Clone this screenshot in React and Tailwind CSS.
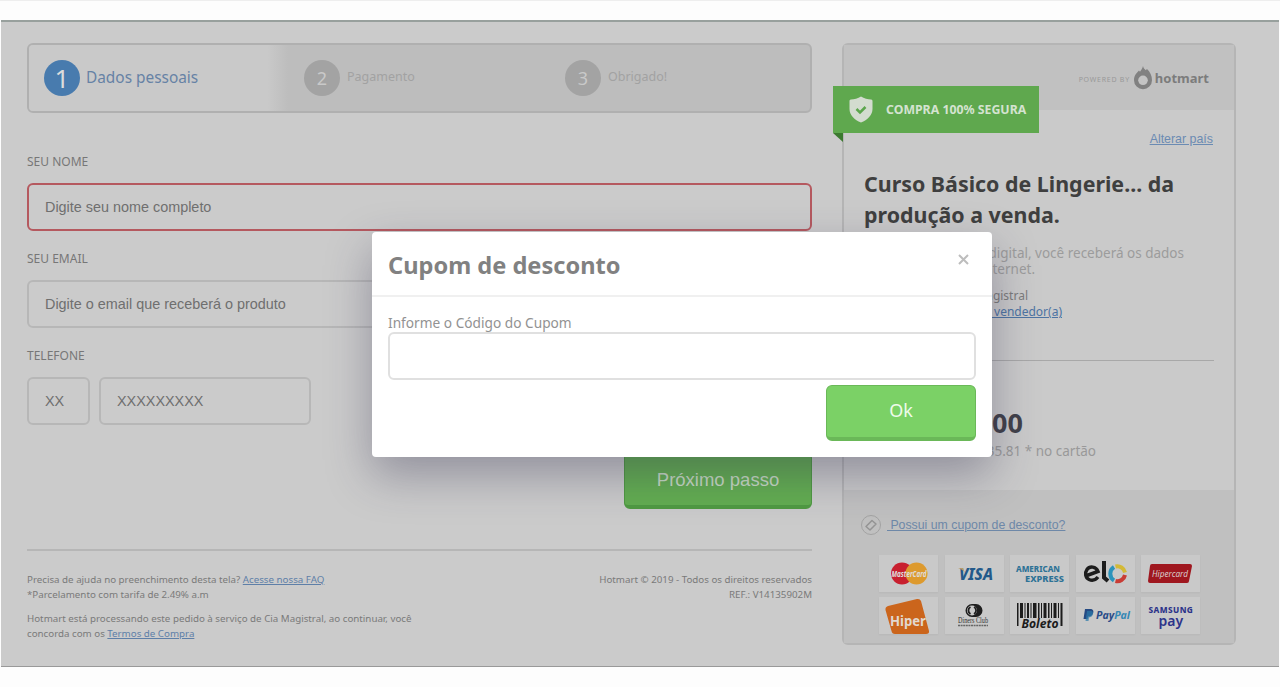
import React from "react";

const steps = [
  { number: 2, label: "Pagamento" },
  { number: 3, label: "Obrigado!" },
];

const inputClass =
  "block h-12 w-full rounded-md border-2 bg-transparent px-4 font-['Liberation_Sans',sans-serif] outline-none placeholder:text-[#6f6f6f] placeholder:opacity-100";

const Steps = () => (
  <div className="flex h-[70px] overflow-hidden rounded-md border-2 border-[#b0b0b0] bg-[#bdbdbd]">
    <div className="flex w-[259px] items-center bg-gradient-to-r from-[#c9c9c9] from-92% to-[#bdbdbd] pl-[15px]">
      <span className="flex h-9 w-9 items-center justify-center rounded-full bg-[#487bae] text-[26px] leading-none text-[#dcdcdc]">
        1
      </span>
      <span className="ml-[6px] pb-[1px] text-[15.4px] text-[#6682a5]">Dados pessoais</span>
    </div>
    {steps.map((step) => (
      <div key={step.number} className="flex w-[261px] items-center pl-4">
        <span className="flex h-9 w-9 items-center justify-center rounded-full bg-[#a3a3a3] text-[18px] text-[#c9c9c9]">
          {step.number}
        </span>
        <span className="ml-[7px] pb-[1px] text-[12.5px] text-[#a2a2a2]">{step.label}</span>
      </div>
    ))}
  </div>
);

const Label = ({ children }) => (
  <div className="flex h-[22px] items-center text-[12px] text-[#777777]">{children}</div>
);

const CheckoutForm = () => (
  <div className="w-[785px] pt-[21px]">
    <Steps />
    <div className="pt-[38px]">
      <Label>SEU NOME</Label>
      <input
        className={`${inputClass} mt-[10px] border-[#b5595f] text-[14.4px]`}
        placeholder="Digite seu nome completo"
      />
    </div>
    <div className="pt-[17px]">
      <Label>SEU EMAIL</Label>
      <input
        className={`${inputClass} mt-[10px] border-[#b7b7b7] text-[14.4px]`}
        placeholder="Digite o email que receberá o produto"
      />
    </div>
    <div className="pt-[17px]">
      <Label>TELEFONE</Label>
      <div className="mt-[10px] flex gap-[9px]">
        <div className="w-[63px]">
          <input className={`${inputClass} border-[#b7b7b7] text-[14.4px]`} placeholder="XX" />
        </div>
        <div className="w-[212px]">
          <input className={`${inputClass} border-[#b7b7b7] text-[14.4px]`} placeholder="XXXXXXXXX" />
        </div>
      </div>
    </div>
    <div className="mt-[27px] flex justify-end">
      <button className="h-[57px] w-[188px] rounded-md border border-b-4 border-[#4f9a42] bg-[#63ae51] pt-[2px] font-['Liberation_Sans',sans-serif] text-[18.5px] text-[#c9dcc5]">
        Próximo passo
      </button>
    </div>
    <div className="mt-10 border-t-2 border-[#b6b6b6]" />
    <div className="flex justify-between pt-[22px] text-[9.75px] leading-[14.5px] text-[#7a7a7a]">
      <div>
        <p>
          Precisa de ajuda no preenchimento desta tela?{" "}
          <a className="text-[#5e7fa8] underline">Acesse nossa FAQ</a>
        </p>
        <p>*Parcelamento com tarifa de 2.49% a.m</p>
        <p className="mt-[10px] w-[400px]">
          Hotmart está processando este pedido à serviço de Cia Magistral, ao continuar, você
          <br />
          concorda com os <a className="text-[#5e7fa8] underline">Termos de Compra</a>
        </p>
      </div>
      <div className="text-right">
        <p>Hotmart © 2019 - Todos os direitos reservados</p>
        <p>REF.: V14135902M</p>
      </div>
    </div>
  </div>
);

const Flame = () => (
  <svg width="18" height="24" viewBox="0 0 18 24">
    <path
      d="M9 0c.3 2 1.500 3 2.700 4.300l1.300-1.300c3 3 5 6.500 5 11.200A9 9 0 0 1 0 14.200C0 9.500 2.500 7 5 4.500l1 1.300C7 4 8.500 2.500 9 0Z"
      fill="#818181"
    />
    <circle cx="9" cy="14.300" r="4.800" fill="#c4c4c4" />
  </svg>
);

const Shield = () => (
  <svg width="24" height="27" viewBox="0 0 24 27">
    <path d="M12 .5c3 2 7 3 10 3 1.500 0 1.500 1 1.500 2V13c0 6-5 11-11.500 13.500C5.500 24 .5 19 .5 13V5.500c0-1 0-2 1.500-2 3 0 7-1 10-3Z" fill="#d3dccf" />
    <path d="m7.500 13 3.500 3.500 5.500-5.500" fill="none" stroke="#5ba64c" strokeWidth="2.500" />
  </svg>
);

const Mastercard = () => (
  <svg width="59" height="36" viewBox="0 0 59 36">
    <circle cx="23" cy="17.500" r="11" fill="#c8202f" />
    <circle cx="37.500" cy="17.500" r="11" fill="#dd9a2e" />
    <text x="12.500" y="20.500" fontSize="8" fontWeight="700" fontStyle="italic" fill="#dedede" textLength="35" lengthAdjust="spacingAndGlyphs">
      MasterCard
    </text>
  </svg>
);

const Visa = () => (
  <svg width="59" height="36" viewBox="0 0 59 36">
    <text x="14" y="23.500" fontSize="16.500" fontWeight="800" fontStyle="italic" fill="#23598a" textLength="34" lengthAdjust="spacingAndGlyphs">
      VISA
    </text>
    <path d="M13 12h5l2 5c-2-3-4-4-7-5Z" fill="#b89a68" />
  </svg>
);

const Amex = () => (
  <svg width="59" height="36" viewBox="0 0 59 36" fontWeight="800" fill="#2d7296">
    <text x="6" y="15.500" fontSize="8.500" textLength="44" lengthAdjust="spacingAndGlyphs">
      AMERICAN
    </text>
    <text x="15" y="25.500" fontSize="8.500" textLength="39" lengthAdjust="spacingAndGlyphs">
      EXPRESS
    </text>
  </svg>
);

const Elo = () => (
  <svg width="59" height="36" viewBox="0 0 59 36" fill="none" strokeWidth="4">
    <path d="M9.500 20 22 15.500C20 10 13.500 10 11 13.500s-1.500 8.500 2 10 6.500.5 9-2.500" stroke="#1d1d1d" strokeWidth="3.500" />
    <path d="M28 5v16.500l4 3.500" stroke="#1d1d1d" />
    <path d="M38 24.500A8 8 0 0 1 38 11" stroke="#2b93bb" />
    <path d="M39.500 10.500A7.800 7.800 0 0 1 49 16.500" stroke="#d3b936" />
    <path d="M49 19A7.800 7.800 0 0 1 39.500 25" stroke="#c93c35" />
  </svg>
);

const Hipercard = () => (
  <svg width="59" height="36" viewBox="0 0 59 36">
    <path d="M11 8h38a2 2 0 0 1 2 2l-3 15a2 2 0 0 1-2 2H9a2 2 0 0 1-2-2l2-15a2 2 0 0 1 2-2Z" fill="#9f171f" />
    <text x="11" y="21" fontSize="9.500" fontStyle="italic" fill="#d8cccc" textLength="36" lengthAdjust="spacingAndGlyphs">
      Hipercard
    </text>
  </svg>
);

const Hiper = () => (
  <svg width="59" height="36" viewBox="0 0 59 36">
    <path d="M9 8 38 1q3-.5 4 2l8 30q.5 3-3 3H16q-3 0-3.500-3L6.500 12q-.5-3 2.500-4Z" fill="#cb651c" />
    <text x="11" y="28" fontSize="14" fontWeight="700" fill="#e2d8cf" textLength="36" lengthAdjust="spacingAndGlyphs">
      Hiper
    </text>
  </svg>
);

const Diners = () => (
  <svg width="59" height="36" viewBox="0 0 59 36">
    <path d="M27 6h4a6.300 6.300 0 0 1 0 13h-4a6.500 6.500 0 0 1 0-13Z" fill="#1f1f1f" />
    <circle cx="27" cy="12.500" r="5" fill="#c9c9c9" />
    <path d="M25.500 9a4 4 0 0 0 0 7M29 9a4 4 0 0 1 0 7" fill="none" stroke="#1f1f1f" strokeWidth="1.800" />
    <text x="13" y="25" fontSize="7.500" fontFamily="Liberation Serif" fill="#333" textLength="30" lengthAdjust="spacingAndGlyphs">
      Diners Club
    </text>
    <path d="M13 27.500h30" stroke="#666" strokeWidth="1.500" strokeDasharray="2 .6" />
  </svg>
);

const bars = [
  [7, 1.5], [10, 3], [14.5, 1], [17, 2], [20.5, 1], [23, 3.5], [28, 1.5], [31, 1], [33.5, 3],
  [38, 1.5], [41, 1], [43.5, 3], [48, 1], [50.5, 2],
];

const Boleto = () => (
  <svg width="59" height="36" viewBox="0 0 59 36">
    {bars.map(([x, width]) => (
      <rect key={x} x={x} y="5" width={width} height={x < 10 || x > 50 ? 23 : 15} fill="#1c1c1c" />
    ))}
    <text x="11.500" y="30" fontSize="12" fontWeight="700" fontStyle="italic" fill="#1c1c1c" textLength="37" lengthAdjust="spacingAndGlyphs">
      Boleto
    </text>
  </svg>
);

const PayPal = () => (
  <svg width="55" height="33" viewBox="0 0 55 33">
    <path d="M7 10h5c3 0 4 2 3 4.500S12 17.500 10 17.500L9.500 20H5.500Z" fill="#254a83" />
    <path d="M9 12h4.500c2.500 1 2 6-2.500 6.500L10.500 22H7.500Z" fill="#2b79aa" fillOpacity="0.7" />
    <text x="18" y="20" fontSize="10.500" fontWeight="700" fontStyle="italic" fill="#294c88" textLength="34" lengthAdjust="spacingAndGlyphs">
      Pay<tspan fill="#3588b5">Pal</tspan>
    </text>
  </svg>
);

const SamsungPay = () => (
  <div className="flex flex-col items-center text-[#2d348a]">
    <span className="text-[8.2px] leading-[11px] font-extrabold tracking-[0.4px]">SAMSUNG</span>
    <span className="-mt-px text-[14px] leading-[14px] font-semibold">pay</span>
  </div>
);

const paymentMethods = [Mastercard, Visa, Amex, Elo, Hipercard, Hiper, Diners, Boleto, PayPal, SamsungPay];

const ProductSummary = () => (
  <div className="relative mt-[21px] flex h-[602px] w-[394px] flex-col rounded-md border-2 border-[#b5b5b5] bg-[#cacaca]">
    <div className="flex h-[65px] items-center justify-end bg-[#c1c1c1] pr-[25px]">
      <span className="mr-1 pt-[6px] text-[7px] tracking-[0.75px] text-[#999999]">POWERED BY</span>
      <Flame />
      <span className="ml-[3px] pt-[2px] text-[13px] font-bold text-[#7c7c7c]">hotmart</span>
    </div>

    {/* Ribbon */}
    <div className="absolute top-[41px] -left-[11px]">
      <div className="flex h-[47px] w-[206px] items-center bg-[#5fa84e] pl-4">
        <Shield />
        <span className="ml-[13px] pt-[2px] text-[12.3px] font-bold text-[#d4e3d0]">COMPRA 100% SEGURA</span>
      </div>
      <div className="h-0 w-0 border-t-[9px] border-l-[10px] border-t-[#3c7a30] border-l-transparent" />
    </div>

    <div className="flex flex-1 flex-col px-[20px] pt-[19px]">
      <a className="pr-px text-right font-['Liberation_Sans',sans-serif] text-[12.4px] leading-5 text-[#6b8bb3] underline">
        Alterar país
      </a>
      <h1 className="mt-[19px] text-[21.4px] leading-[31px] font-bold text-[#3f3f3f]">
        Curso Básico de Lingerie... da
        <br />
        produção a venda.
      </h1>
      <div className="mt-[15px] w-[320px] text-right text-[13.5px] leading-4 text-[#9c9c9c]">
        <p>digital, você receberá os dados</p>
        <p className="pr-[149px]">internet.</p>
      </div>
      <div className="mt-[11px] w-[198px] text-right text-[12px] leading-4 text-[#7c7c7c]">
        <p className="pr-[34px]">Magistral</p>
        <p className="text-[#4d74a3] underline">o vendedor(a)</p>
      </div>
      <div className="mt-[40px] border-t border-[#a8a8a8]" />
      <p className="mt-[42px] w-[159px] text-right text-[27px] leading-10 font-bold text-[#414149]">0,00</p>
      <p className="w-[232px] text-right text-[13.5px] leading-4 text-[#999999]">35.81 * no cartão</p>
    </div>

    <div className="h-[153px] bg-[#c0c0c0] pt-6">
      <div className="flex items-center pl-4">
        <svg width="22" height="22" viewBox="0 0 22 22" fill="none" stroke="#a3a3a3">
          <circle cx="11" cy="11" r="9.500" />
          <path d="m6 12.500 6-6 4 3.500-6 6Z" stroke="#949494" strokeWidth="1.500" strokeLinejoin="round" />
        </svg>
        <a className="ml-[5px] font-['Liberation_Sans',sans-serif] text-[12.3px] leading-[18px] whitespace-pre text-[#6e88a8] underline">
          {" Possui um cupom de desconto?"}
        </a>
      </div>
      <div className="ml-[35px] mt-[19px] grid w-[328px] grid-cols-5 gap-y-[5px]">
        {paymentMethods.map((Logo, index) => (
          <div key={index} className="flex h-[37px] w-[59px] items-center justify-center bg-[#c9c9c9] shadow-xs">
            <Logo />
          </div>
        ))}
      </div>
    </div>
  </div>
);

const CouponModal = () => (
  <div className="absolute top-[231px] left-[372px] h-[225px] w-[620px] rounded-sm bg-white shadow-[0_18px_45px_rgba(45,42,75,0.36)]">
    <div className="flex h-[65px] items-center justify-between border-b-2 border-[#f0f0f0] pr-[22px] pl-4">
      <h2 className="pt-1 text-[23.6px] font-bold text-[#818181]">Cupom de desconto</h2>
      <svg width="13" height="13" viewBox="0 0 13 13" stroke="#bdbdbd" strokeWidth="2" className="-mt-[8px]">
        <path d="m2 2 9 9M11 2l-9 9" />
      </svg>
    </div>
    <div className="px-4 pt-[17px]">
      <p className="text-[13.7px] leading-[18px] text-[#929292]">Informe o Código do Cupom</p>
      <input className={`${inputClass} border-[#e0e0e0] text-[14.4px]`} />
      <div className="flex justify-end pt-[5px]">
        <button className="h-[56px] w-[150px] rounded-md border border-b-4 border-[#6ab858] bg-[#7bd166] pb-[3px] text-[18px] text-[#eefbea]">
          Ok
        </button>
      </div>
    </div>
  </div>
);

const App = () => {
  return (
    <div className="relative h-[687px] w-[1280px] overflow-hidden border-t border-[#eeeeee] bg-[#fdfdfd] pt-[19px] font-['Noto_Sans','Open_Sans',sans-serif]">
      <div className="mx-px flex h-[647px] gap-[30px] border-t-2 border-b border-t-[#98a09d] border-b-[#999999] bg-[#cbcbcb] pl-[26px]">
        <CheckoutForm />
        <ProductSummary />
      </div>
      <CouponModal />
    </div>
  );
};

export default App;
